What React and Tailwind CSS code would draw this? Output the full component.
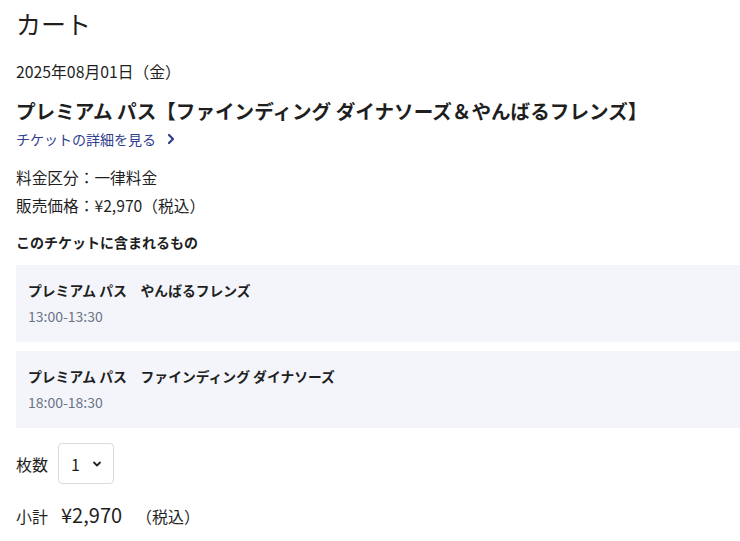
import { useState } from "react";

const items = [
  { name: "プレミアム パス　やんばるフレンズ", time: "13:00-13:30" },
  { name: "プレミアム パス　ファインディング ダイナソーズ", time: "18:00-18:30" },
];

const Cart = () => {
  const [qty, setQty] = useState("1");

  return (
    <div
      className="min-h-screen bg-white text-[#1f1f1f] overflow-hidden"
      style={{ fontFamily: '"Noto Sans CJK JP", "Noto Sans", sans-serif' }}
    >
      <div className="pl-4 w-[760px]">
        <h1 className="text-[25px] leading-[36px] pt-[5px] font-normal">カート</h1>

        <p className="mt-[19px] text-[15.8px] leading-[24px]">2025年08月01日（金）</p>

        <h2 className="mt-[12px] text-[19.6px] leading-[30px] font-bold">
          プレミアム パス【ファインディング ダイナソーズ＆やんばるフレンズ】
        </h2>

        <a href="#" className="mt-[2px] inline-flex items-center gap-[10px] text-[14px] leading-[22px] text-[#2f3d8f]">
          チケットの詳細を見る
          <svg width="10" height="12" viewBox="0 0 10 12" fill="none">
            <path d="M3 2l4 4-4 4" stroke="#2f3d8f" strokeWidth="2.2" strokeLinecap="round" strokeLinejoin="round" />
          </svg>
        </a>

        <div className="mt-[14px] text-[15.7px] leading-[28px]">
          <p>料金区分：一律料金</p>
          <p>販売価格：¥2,970（税込）</p>
        </div>

        <p className="mt-[11px] text-[14px] leading-[22px] font-bold">このチケットに含まれるもの</p>

        <div className="mt-[12px] flex flex-col gap-[9px]">
          {items.map((it) => (
            <div key={it.time} className="bg-[#f3f5fb] h-[77px] px-[12px] pt-[14px]">
              <p className="text-[13.8px] leading-[22px] font-bold">{it.name}</p>
              <p className="mt-[4px] text-[14px] leading-[22px] text-[#6b7385]">{it.time}</p>
            </div>
          ))}
        </div>

        <div className="mt-[15px] flex items-center gap-[10px]">
          <span className="text-[16px]">枚数</span>
          <div className="relative">
            <select
              value={qty}
              onChange={(e) => setQty(e.target.value)}
              className="appearance-none w-[56px] h-[41px] border border-[#dcdcdc] rounded-[4px] pl-[12px] text-[16px] bg-white"
            >
              {[1, 2, 3, 4, 5].map((n) => (
                <option key={n} value={n}>{n}</option>
              ))}
            </select>
            <svg className="absolute right-[12px] top-[17px] pointer-events-none" width="10" height="8" viewBox="0 0 10 8" fill="none">
              <path d="M2 2.5l3 3 3-3" stroke="#222" strokeWidth="1.8" strokeLinecap="round" strokeLinejoin="round" />
            </svg>
          </div>
        </div>

        <div className="mt-[16px] flex items-baseline">
          <span className="text-[16px]">小計</span>
          <span className="ml-[13px] text-[20px]">¥2,970</span>
          <span className="ml-[14px] text-[16px]">（税込）</span>
        </div>
      </div>
    </div>
  );
};

export default Cart;
